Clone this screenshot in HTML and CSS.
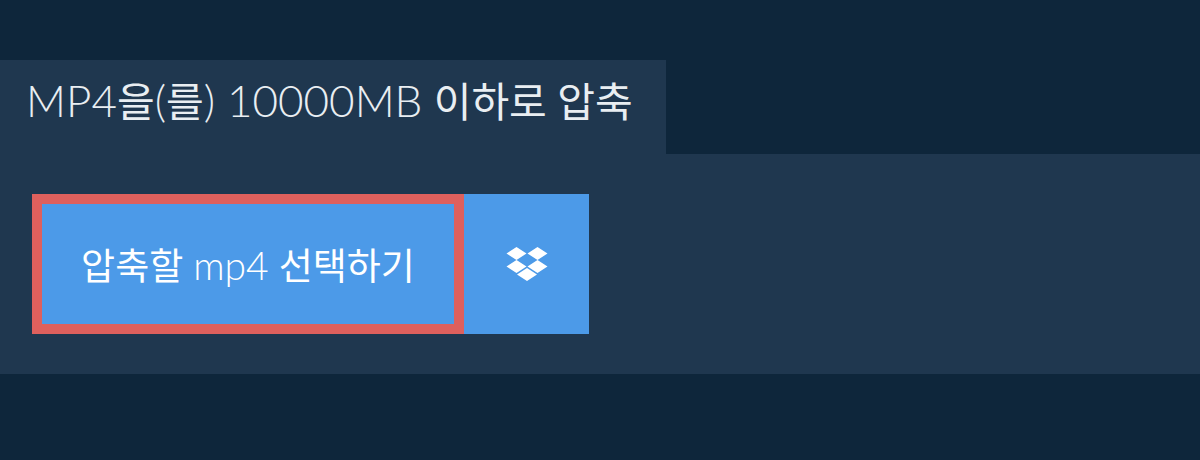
FILE: index.html
```html
<!DOCTYPE html>
<html lang="ko">
  <head>
    <meta charset="UTF-8" />
    <title>MP4 압축</title>
    <link rel="stylesheet" href="styles.css">
  </head>
  <body>
    <div class="tab-title">
      <span class="light">MP4<span class="hangul">을</span>(<span class="hangul">를</span>) 10000MB</span> <span class="hangul">이하로 압축</span>
    </div>
    <div class="panel">
      <div class="upload-group">
        <button class="file-button"><span class="hangul">압축할</span> <span class="light">mp4</span> <span class="hangul">선택하기</span></button>
        <button class="dropbox-button" aria-label="Dropbox">
          <svg width="42" height="36" viewBox="0 0 42 36" fill="#fff">
            <path d="M10.500 1 .5 7.500l10 6.500 10-6.500zM31.500 1l-10 6.500 10 6.500 10-6.500zM.5 20.500l10 6.500 10-6.500-10-6.500zM31.500 14l-10 6.500 10 6.500 10-6.500zM21 22l-10 6.500L21 35l10-6.500z"/>
          </svg>
        </button>
      </div>
    </div>
  </body>
</html>
```

FILE: styles.css
```css
body {
  margin: 0;
  height: 460px;
  padding-top: 60px;
  box-sizing: border-box;
  background-color: #0e263b;
  font-family: Lato, "Noto Sans CJK KR", sans-serif;
  overflow: hidden;
}
.tab-title {
  width: 666px;
  height: 94px;
  box-sizing: border-box;
  padding: 13px 0 0 26px;
  background-color: #1f374f;
  color: #e9eef2;
  font-size: 44px;
  line-height: 54px;
  white-space: nowrap;
}
.light {
  font-weight: 300;
}
.hangul {
  font-weight: 400;
  font-size: 41px;
}
.panel {
  height: 220px;
  box-sizing: border-box;
  padding: 40px 32px;
  background-color: #1f374f;
}
.upload-group {
  display: flex;
  height: 140px;
}
.file-button,
.dropbox-button {
  border: none;
  padding: 0;
  color: white;
  background-color: #4c9ae8;
  font-family: inherit;
  cursor: pointer;
}
.file-button {
  width: 432px;
  border: 10px solid #de605d;
  font-size: 39px;
  white-space: nowrap;
}
.file-button .hangul {
  font-size: 37px;
}
.dropbox-button {
  width: 125px;
  display: flex;
  align-items: center;
  justify-content: center;
}
```
